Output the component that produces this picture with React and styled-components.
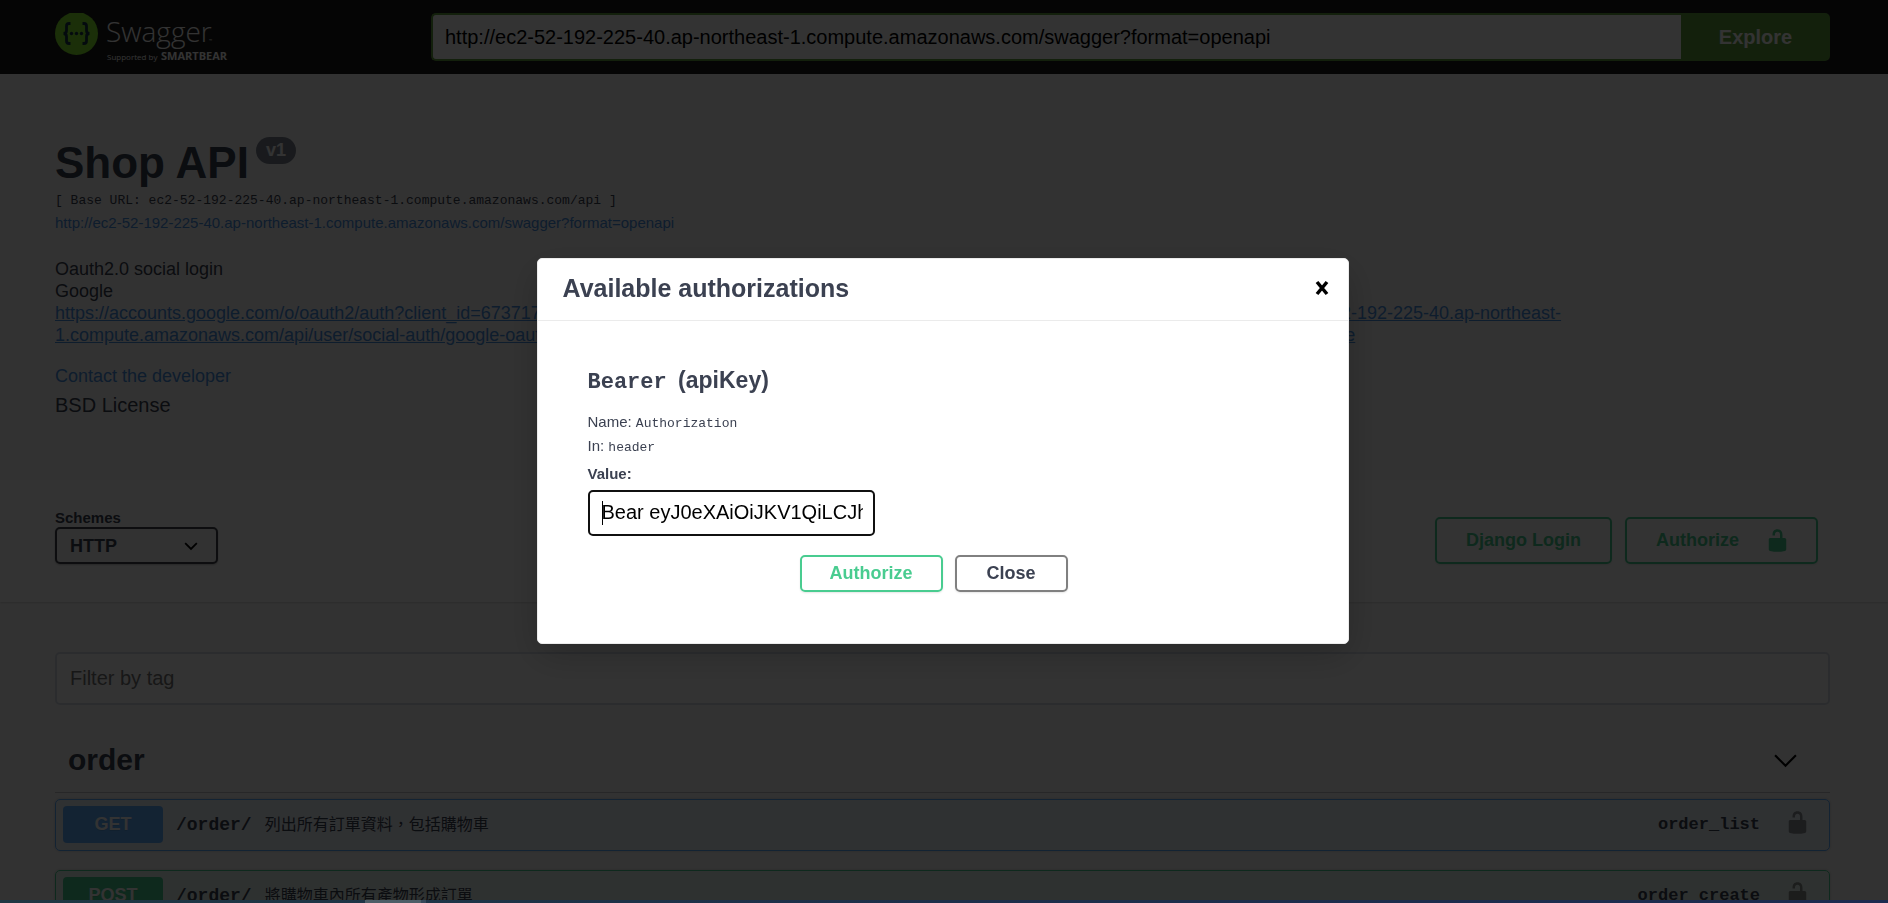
import React from "react";
import styled, { createGlobalStyle } from "styled-components";

const sans = `"Liberation Sans", Arial, "Noto Sans CJK TC", sans-serif`;
const mono = `"Liberation Mono", "Courier New", monospace`;

const Global = createGlobalStyle`
  *, *::before, *::after { box-sizing: border-box; }
  body {
    margin: 0;
    overflow: hidden;
    background: #fafafa;
    color: #3b4151;
    font-family: ${sans};
  }
  button, input, select { font-family: inherit; }
  h1, h2, h3, h4, p { margin: 0; }
`;

const Page = styled.div`
  height: 100vh;
  overflow: hidden;
`;

const Wrapper = styled.div`
  padding: 0 58px 0 55px;
`;

const Topbar = styled.header`
  background: #1b1b1b;
  padding: 13px 0;
`;

const TopbarRow = styled(Wrapper)`
  display: flex;
  align-items: center;
`;

const LogoLink = styled.a`
  flex: 0 0 376px;
  height: 48px;
  svg { display: block; }
`;

const UrlForm = styled.form`
  flex: 1;
  display: flex;
  height: 48px;
`;

const UrlInput = styled.input`
  flex: 1;
  min-width: 0;
  border: 2px solid #62a03f;
  border-right: 0;
  border-radius: 5px 0 0 5px;
  padding: 0 12px;
  font-size: 20px;
  color: #000;
  background: #fff;
  outline: none;
`;

const ExploreButton = styled.button`
  flex: 0 0 149px;
  border: 0;
  border-radius: 0 5px 5px 0;
  background: #62a03f;
  color: #fff;
  font-size: 20px;
  font-weight: 700;
`;

const Info = styled.section`
  padding: 63px 0 62px;
`;

const Title = styled.h1`
  display: flex;
  align-items: flex-start;
  font-size: 44px;
  line-height: 52px;
  font-weight: 700;
`;

const Version = styled.small`
  margin: 0 0 0 7px;
  padding: 0 10px;
  border-radius: 27px;
  background: #7d8492;
  color: #fff;
  font-size: 18px;
  line-height: 27px;
`;

const BaseUrl = styled.pre`
  margin: 3px 0 0;
  font-family: ${mono};
  font-size: 13px;
  line-height: 18px;
`;

const SpecLink = styled.a`
  display: block;
  margin-top: 2px;
  color: #4990e2;
  font-size: 15px;
  line-height: 22px;
  text-decoration: none;
`;

const Description = styled.div`
  margin-top: 24px;
  font-size: 18px;
  line-height: 22px;
  white-space: nowrap;
  a { color: #4990e2; }
`;

const ContactLink = styled.a`
  display: block;
  margin-top: 18px;
  color: #4990e2;
  font-size: 18px;
  line-height: 24px;
  text-decoration: none;
`;

const License = styled.p`
  margin-top: 4px;
  font-size: 20px;
  line-height: 26px;
`;

const SchemeBar = styled.section`
  padding: 37px 0 38px;
  background: #fff;
  box-shadow: 0 1px 2px rgba(0, 0, 0, 0.15);
`;

const SchemeRow = styled(Wrapper)`
  display: flex;
  justify-content: space-between;
  align-items: flex-end;
`;

const SchemeLabel = styled.label`
  display: flex;
  flex-direction: column;
  font-size: 15px;
  line-height: 18px;
  margin-top: -8px;
  font-weight: 700;
`;

const SelectBox = styled.span`
  display: grid;
  width: 163px;
  height: 37px;
  align-items: center;
  > * { grid-area: 1 / 1; }
  svg { justify-self: end; margin-right: 20px; pointer-events: none; }
`;

const Select = styled.select`
  appearance: none;
  width: 100%;
  height: 100%;
  padding: 0 13px;
  border: 2px solid #41444e;
  border-radius: 5px;
  background: #f7f7f7;
  box-shadow: 0 1px 2px rgba(0, 0, 0, 0.25);
  color: #3b4151;
  font-size: 18px;
  font-weight: 700;
`;

const ButtonGroup = styled.div`
  display: flex;
  gap: 13px;
  padding-right: 12px;
`;

const Button = styled.button`
  display: flex;
  align-items: center;
  justify-content: ${(p) => (p.$icon ? "space-between" : "center")};
  width: ${(p) => p.$width}px;
  height: ${(p) => (p.$small ? 37 : 47)}px;
  padding: 0 ${(p) => (p.$icon ? 26 : 29)}px 0 29px;
  border: 2px solid ${(p) => (p.$plain ? "#808080" : "#49cc90")};
  border-radius: 5px;
  background: transparent;
  box-shadow: 0 1px 2px rgba(0, 0, 0, 0.1);
  color: ${(p) => (p.$plain ? "#3b4151" : "#49cc90")};
  font-size: 18px;
  font-weight: 700;
  white-space: nowrap;
`;

const FilterInput = styled.input`
  display: block;
  width: 100%;
  height: 53px;
  margin-top: 50px;
  padding: 0 13px;
  border: 2px solid #d8dde7;
  border-radius: 5px;
  background: #fff;
  font-size: 20px;
  &::placeholder { color: #757575; opacity: 1; }
`;

const TagHeader = styled.div`
  display: flex;
  align-items: center;
  justify-content: space-between;
  height: 63px;
  margin: 25px 0 6px;
  padding: 0 32px 2px 13px;
  border-bottom: 1px solid rgba(59, 65, 81, 0.3);
`;

const TagTitle = styled.h2`
  font-size: 30px;
  line-height: 36px;
`;

const methodColors = {
  GET: ["#61affe", "rgba(97, 175, 254, 0.1)"],
  POST: ["#49cc90", "rgba(73, 204, 144, 0.1)"],
};

const Operation = styled.article`
  display: flex;
  align-items: center;
  height: 52px;
  margin-bottom: 19px;
  padding: 0 19px 1px 7px;
  border: 1px solid ${(p) => methodColors[p.$method][0]};
  border-radius: 5px;
  background: ${(p) => methodColors[p.$method][1]};
  box-shadow: 0 0 3px rgba(0, 0, 0, 0.19);
`;

const Method = styled.span`
  width: 100px;
  border-radius: 4px;
  background: ${(p) => methodColors[p.$method][0]};
  color: #fff;
  font-size: 18px;
  line-height: 37px;
  font-weight: 700;
  text-align: center;
  text-shadow: 0 1px 0 rgba(0, 0, 0, 0.1);
`;

const Path = styled.span`
  padding: 0 13px;
  font-family: ${mono};
  font-size: 18px;
  font-weight: 700;
`;

const Summary = styled.span`
  flex: 1;
  padding-bottom: 3px;
  font-size: 16px;
`;

const OperationId = styled.span`
  margin-right: 25px;
  font-family: ${mono};
  font-size: 17px;
  font-weight: 700;
`;

const IconButton = styled.button`
  display: flex;
  padding: 0;
  border: 0;
  background: none;
  color: #000;
  opacity: ${(p) => (p.$faded ? 0.4 : 1)};
`;

const LockButton = styled(IconButton)`
  padding-bottom: 4px;
`;

const Backdrop = styled.div`
  position: fixed;
  inset: 0;
  display: flex;
  align-items: center;
  justify-content: center;
  padding: 0 3px 2px 0;
  background: rgba(0, 0, 0, 0.8);
`;

const Modal = styled.div`
  width: 812px;
  max-width: 100%;
  border: 1px solid #ebebeb;
  border-radius: 5px;
  background: #fff;
  box-shadow: 0 12px 37px rgba(0, 0, 0, 0.2);
`;

const ModalHeader = styled.div`
  display: flex;
  align-items: center;
  justify-content: space-between;
  height: 62px;
  padding: 0 18px 2px 25px;
  border-bottom: 1px solid #ebebeb;
`;

const ModalTitle = styled.h3`
  font-size: 25px;
  line-height: 30px;
`;

const AuthForm = styled.form`
  padding: 44px 50px 51px;
`;

const AuthTitle = styled.h4`
  font-size: 23px;
  line-height: 30px;
  margin-bottom: 15px;
  code { font-family: ${mono}; font-size: 22px; line-height: 1; margin-right: 5px; }
`;

const AuthLine = styled.p`
  font-size: 15px;
  line-height: 24px;
  code { font-family: ${mono}; font-size: 13px; line-height: 1; }
`;

const ValueLabel = styled.label`
  display: block;
  margin-top: 7px;
  font-size: 15px;
  line-height: 17px;
  font-weight: 700;
`;

const ValueInput = styled.input`
  display: block;
  width: 287px;
  height: 46px;
  margin-top: 8px;
  padding: 0 10px 0 12px;
  border: 2px solid #101010;
  border-radius: 5px;
  background: linear-gradient(#000, #000) 12px center / 1px 24px no-repeat #fff;
  color: #000;
  font-size: 20px;
  outline: none;
`;

const ModalActions = styled.div`
  display: flex;
  justify-content: center;
  gap: 12px;
  margin-top: 19px;
  padding-right: 18px;
`;

const EdgeStrip = styled.div`
  position: fixed;
  inset: auto 0 0 0;
  display: flex;
  height: 3px;
  padding-left: 365px;
  background: linear-gradient(90deg, #1f3844, #1c2f4a 50%, #1c2b50);
  &::before { content: ""; width: 56px; background: #4d5e67; }
  &::after { content: ""; width: 5px; background: #35485a; }
`;

function Logo() {
  return (
    <svg width="180" height="52" viewBox="0 0 180 52" role="img" aria-label="Swagger">
      <circle cx="21.5" cy="20.5" r="21.5" fill="#85ea2d" />
      <g fill="none" stroke="#173647" strokeWidth="2.8">
        <path d="M15.500 10.500h-1.500q-2.500 0-2.500 2.500v4.500q0 3-3 3q3 0 3 3v4.500q0 2.500 2.500 2.500h1.500" />
        <path d="M27.500 10.500h1.500q2.500 0 2.500 2.500v4.500q0 3 3 3q-3 0-3 3v4.500q0 2.500-2.500 2.500h-1.500" />
      </g>
      <g fill="#173647">
        <circle cx="16.500" cy="20.500" r="1.700" />
        <circle cx="21.500" cy="20.500" r="1.700" />
        <circle cx="26.500" cy="20.500" r="1.700" />
      </g>
      <g fill="#fff" fontFamily="Open Sans, Noto Sans, sans-serif">
        <text x="51" y="29" fontSize="28" fontWeight="300">Swagger</text>
        <text x="154" y="29" fontSize="4">™</text>
        <text x="52" y="47" fontSize="8">Supported by</text>
        <text x="106" y="47" fontSize="11" fontWeight="700">SMARTBEAR</text>
      </g>
    </svg>
  );
}

function Unlocked() {
  return (
    <svg width="25" height="25" viewBox="0 0 20 20" fill="currentColor" aria-hidden="true">
      <path d="M15.800 8H14V5.600C14 2.703 12.665 1 10 1 7.334 1 6 2.703 6 5.600V6h2v-.801C8 3.754 8.797 3 10 3c1.203 0 2 .754 2 2.199V8H4c-.553 0-1 .646-1 1.199V17c0 .549.428 1.139.951 1.307l1.197.387C5.672 18.861 6.550 19 7.100 19h5.800c.549 0 1.428-.139 1.951-.307l1.196-.387c.524-.167.953-.757.953-1.306V9.199C17 8.646 16.352 8 15.800 8z" />
    </svg>
  );
}

function Chevron({ size, weight }) {
  return (
    <svg width={size} height={size} viewBox="0 0 24 24" fill="none" stroke="#000" strokeWidth={weight} aria-hidden="true">
      <path d="M2 7l10 10L22 7" />
    </svg>
  );
}

const operations = [
  { method: "GET", path: "/order/", summary: "列出所有訂單資料，包括購物車", id: "order_list" },
  { method: "POST", path: "/order/", summary: "將購物車內所有產物形成訂單", id: "order_create" },
];

export default function App() {
  return (
    <>
      <Global />
      <Page>
        <Topbar>
          <TopbarRow>
            <LogoLink href="#"><Logo /></LogoLink>
            <UrlForm>
              <UrlInput
                aria-label="Specification URL"
                defaultValue="http://ec2-52-192-225-40.ap-northeast-1.compute.amazonaws.com/swagger?format=openapi"
              />
              <ExploreButton type="button">Explore</ExploreButton>
            </UrlForm>
          </TopbarRow>
        </Topbar>
        <Wrapper>
          <Info>
            <Title>Shop API<Version>v1</Version></Title>
            <BaseUrl>[ Base URL: ec2-52-192-225-40.ap-northeast-1.compute.amazonaws.com/api ]</BaseUrl>
            <SpecLink href="#">
              http://ec2-52-192-225-40.ap-northeast-1.compute.amazonaws.com/swagger?format=openapi
            </SpecLink>
            <Description>
              Oauth2.0 social login<br />
              Google<br />
              <a href="#">
                https://accounts.google.com/o/oauth2/auth?client_id=673717204815-k3v8q0n5d7h2s9b4c6u1e0p5a8g3x7.apps.googleusercontent.com&amp;redirect_uri=http://ec2-52-192-225-40.ap-northeast-<br />
                1.compute.amazonaws.com/api/user/social-auth/google-oauth2/callback&amp;response_type=code&amp;scope=https://www.googleapis.com/auth/userinfo.profile&amp;state=live
              </a>
            </Description>
            <ContactLink href="#">Contact the developer</ContactLink>
            <License>BSD License</License>
          </Info>
        </Wrapper>
        <SchemeBar>
          <SchemeRow>
            <SchemeLabel>
              Schemes
              <SelectBox>
                <Select defaultValue="HTTP"><option>HTTP</option></Select>
                <Chevron size={14} weight={3} />
              </SelectBox>
            </SchemeLabel>
            <ButtonGroup>
              <Button type="button" $width={177}>Django Login</Button>
              <Button type="button" $width={193} $icon>Authorize<Unlocked /></Button>
            </ButtonGroup>
          </SchemeRow>
        </SchemeBar>
        <Wrapper>
          <FilterInput placeholder="Filter by tag" aria-label="Filter by tag" />
          <TagHeader>
            <TagTitle>order</TagTitle>
            <IconButton type="button" aria-label="Collapse order">
              <Chevron size={25} weight={2} />
            </IconButton>
          </TagHeader>
          {operations.map((op) => (
            <Operation key={op.id} $method={op.method}>
              <Method $method={op.method}>{op.method}</Method>
              <Path>{op.path}</Path>
              <Summary>{op.summary}</Summary>
              <OperationId>{op.id}</OperationId>
              <LockButton type="button" $faded aria-label={`Authorize ${op.id}`}>
                <Unlocked />
              </LockButton>
            </Operation>
          ))}
        </Wrapper>
      </Page>
      <Backdrop>
        <Modal role="dialog" aria-labelledby="auth-title">
          <ModalHeader>
            <ModalTitle id="auth-title">Available authorizations</ModalTitle>
            <IconButton type="button" aria-label="Close dialog">
              <svg width="16" height="16" viewBox="0 0 16 16" stroke="#000" strokeWidth="3.500">
                <path d="M3 2l10 12M13 2L3 14" />
              </svg>
            </IconButton>
          </ModalHeader>
          <AuthForm>
            <AuthTitle><code>Bearer</code> (apiKey)</AuthTitle>
            <AuthLine>Name: <code>Authorization</code></AuthLine>
            <AuthLine>In: <code>header</code></AuthLine>
            <ValueLabel htmlFor="api-key">Value:</ValueLabel>
            <ValueInput id="api-key" defaultValue="Bear eyJ0eXAiOiJKV1QiLCJhbGciOiJIUzI1NiJ9" />
            <ModalActions>
              <Button type="button" $small $width={143}>Authorize</Button>
              <Button type="button" $small $plain $width={113}>Close</Button>
            </ModalActions>
          </AuthForm>
        </Modal>
      </Backdrop>
      <EdgeStrip />
    </>
  );
}
